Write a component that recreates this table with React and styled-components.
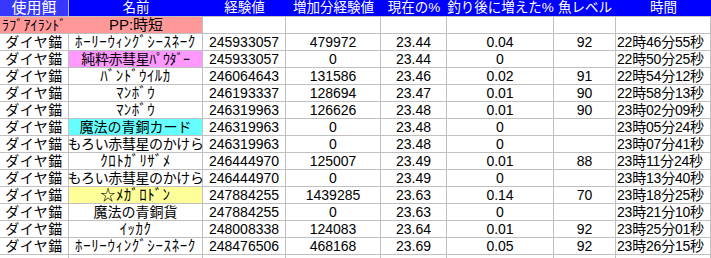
import React from 'react';
import styled, { createGlobalStyle } from 'styled-components';

// --- estilos globais ---
const GlobalStyle = createGlobalStyle`
  html, body {
    margin: 0;
    padding: 0;
    background: #fff;
  }
  body {
    font-family: "Liberation Sans", "Noto Sans CJK JP", sans-serif;
  }
`;

const COLS = '69px 134px 83px 95px 66px 107px 62px 95px';

const Sheet = styled.div`
  display: grid;
  grid-template-columns: ${COLS};
  grid-auto-rows: 17px;
  width: 711px;
  height: 258px;
  overflow: hidden;
`;

const HeaderCell = styled.div`
  display: flex;
  align-items: center;
  justify-content: center;
  box-sizing: border-box;
  background: ${(p) => (p.$first ? '#3737ff' : '#0000ff')};
  border-right: ${(p) => (p.$first ? '1px solid #b8b8ff' : 'none')};
  border-bottom: 1px solid #c0c0c0;
  color: #fff;
  font-size: ${(p) => (p.$first ? '15px' : '13.5px')};
  white-space: nowrap;
  line-height: 16px;
`;

const Cell = styled.div`
  display: flex;
  align-items: center;
  justify-content: ${(p) => (p.$align === 'left' ? 'flex-start' : 'center')};
  box-sizing: border-box;
  background: ${(p) => p.$bg || '#fff'};
  border-right: 1px solid #c0c0c0;
  border-bottom: 1px solid #c0c0c0;
  color: #000;
  font-size: 14px;
  line-height: 16px;
  white-space: nowrap;
  padding-left: ${(p) => (p.$align === 'left' ? '1px' : '0')};
`;

// linha mesclada "ラブアイランド / PP:時短"
const MergedCell = styled.div`
  grid-column: span 2;
  display: grid;
  grid-template-columns: 69px 134px;
  align-items: center;
  box-sizing: border-box;
  background: #ff9999;
  border-right: 1px solid #c0c0c0;
  border-bottom: 1px solid #c0c0c0;
  line-height: 16px;
  white-space: nowrap;
`;

const MergedLabel = styled.span`
  padding-left: 2px;
  font-size: 14px;
  letter-spacing: 0.2px;
`;

const MergedTitle = styled.span`
  text-align: center;
  font-size: 15px;
`;

const Name = styled.span`
  font-size: ${(p) => p.$size || '14px'};
  letter-spacing: ${(p) => p.$spacing || '0'};
`;

const Time = styled.span`
  font-size: 14px;
  letter-spacing: -0.2px;
`;

const headers = ['使用餌', '名前', '経験値', '増加分経験値', '現在の%', '釣り後に増えた%', '魚レベル', '時間'];

const rows = [
  ['ﾎｰﾘｰｳｨﾝｸﾞｼｰｽﾈｰｸ', null, '245933057', '479972', '23.44', '0.04', '92', '22時46分55秒'],
  ['純粋赤彗星ﾊﾟｳﾀﾞｰ', '#ff99ff', '245933057', '0', '23.44', '0', '', '22時50分25秒'],
  ['ﾊﾞﾝﾄﾞｳｲﾙｶ', null, '246064643', '131586', '23.46', '0.02', '91', '22時54分12秒'],
  ['ﾏﾝﾎﾞｳ', null, '246193337', '128694', '23.47', '0.01', '90', '22時58分13秒'],
  ['ﾏﾝﾎﾞｳ', null, '246319963', '126626', '23.48', '0.01', '90', '23時02分09秒'],
  ['魔法の青銅カード', '#66ffff', '246319963', '0', '23.48', '0', '', '23時05分24秒'],
  ['もろい赤彗星のかけら', null, '246319963', '0', '23.48', '0', '', '23時07分41秒'],
  ['ｸﾛﾄｶﾞﾘｻﾞﾒ', null, '246444970', '125007', '23.49', '0.01', '88', '23時11分24秒'],
  ['もろい赤彗星のかけら', null, '246444970', '0', '23.49', '0', '', '23時13分40秒'],
  ['☆ﾒｶﾞﾛﾄﾞﾝ', '#ffff99', '247884255', '1439285', '23.63', '0.14', '70', '23時18分25秒'],
  ['魔法の青銅貨', null, '247884255', '0', '23.63', '0', '', '23時21分10秒'],
  ['ｲｯｶｸ', null, '248008338', '124083', '23.64', '0.01', '92', '23時25分01秒'],
  ['ﾎｰﾘｰｳｨﾝｸﾞｼｰｽﾈｰｸ', null, '248476506', '468168', '23.69', '0.05', '92', '23時26分15秒'],
];

// katakana de meia largura fica um pouco maior e mais espaçado
const isHalfWidth = (name) => /^[\uff61-\uff9f☆]+$/.test(name);

const spacingFor = (name) => {
  if (name.startsWith('ﾎｰﾘｰ')) return '0.6px';
  if (isHalfWidth(name)) return '0.4px';
  if (name.length >= 10) return '-0.4px';
  return '0';
};

export default function App() {
  return (
    <>
      <GlobalStyle />
      <Sheet>
        {headers.map((h, i) => (
          <HeaderCell key={h} $first={i === 0}>{h}</HeaderCell>
        ))}

        <MergedCell>
          <MergedLabel>ﾗﾌﾞｱｲﾗﾝﾄﾞ</MergedLabel>
          <MergedTitle>PP:時短</MergedTitle>
        </MergedCell>
        {Array.from({ length: 6 }).map((_, i) => (
          <Cell key={`pp-${i}`} />
        ))}

        {rows.map(([name, bg, exp, inc, now, diff, lvl, time], r) => (
          <React.Fragment key={r}>
            <Cell><Name $spacing="0.5px">ダイヤ錨</Name></Cell>
            <Cell $bg={bg}>
              <Name
                $size={isHalfWidth(name) ? '15px' : '14px'}
                $spacing={spacingFor(name)}
              >
                {name}
              </Name>
            </Cell>
            <Cell>{exp}</Cell>
            <Cell>{inc}</Cell>
            <Cell>{now}</Cell>
            <Cell>{diff}</Cell>
            <Cell>{lvl}</Cell>
            <Cell $align="left"><Time>{time}</Time></Cell>
          </React.Fragment>
        ))}

        {/* linha vazia no rodapé da planilha */}
        {Array.from({ length: 8 }).map((_, i) => (
          <Cell key={`end-${i}`} />
        ))}
      </Sheet>
    </>
  );
}
